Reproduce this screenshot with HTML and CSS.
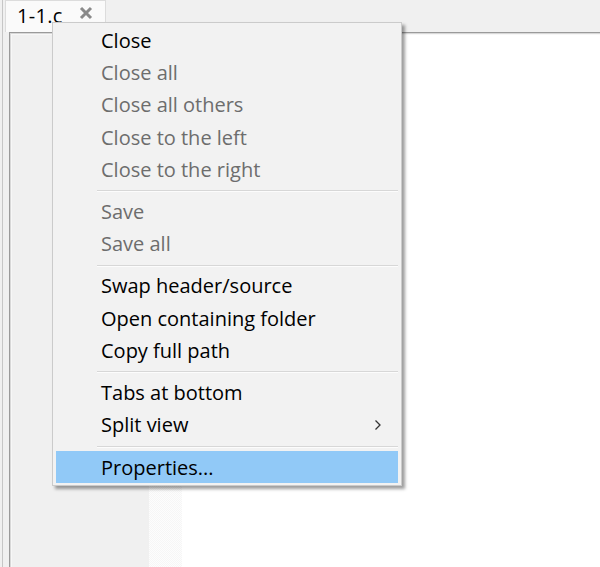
FILE: index.html
```html
<!DOCTYPE html>
<html>
<head>
<meta charset="utf-8">
<link rel="stylesheet" href="styles.css">
</head>
<body>
<div class="window">
  <div class="tabbar">
    <div class="tab">
      <span class="tab-label">1-1.c</span>
      <svg class="tab-close" width="14" height="14" viewBox="0 0 14 14"><path d="M2 2 L12 12 M12 2 L2 12" stroke="#8a8a8a" stroke-width="3" stroke-linecap="butt"/></svg>
    </div>
  </div>
  <div class="editor">
    <div class="gutter"></div>
    <div class="fold"></div>
    <div class="text-area"></div>
  </div>
</div>
<div class="menu">
  <div class="item">Close</div>
  <div class="item disabled">Close all</div>
  <div class="item disabled">Close all others</div>
  <div class="item disabled">Close to the left</div>
  <div class="item disabled">Close to the right</div>
  <div class="sep"></div>
  <div class="item disabled">Save</div>
  <div class="item disabled">Save all</div>
  <div class="sep"></div>
  <div class="item">Swap header/source</div>
  <div class="item">Open containing folder</div>
  <div class="item">Copy full path</div>
  <div class="sep"></div>
  <div class="item">Tabs at bottom</div>
  <div class="item sub">Split view<svg class="arrow" width="8" height="12" viewBox="0 0 8 12"><path d="M1.5 1.5 L6 6 L1.5 10.5" fill="none" stroke="#333" stroke-width="1.3"/></svg></div>
  <div class="sep"></div>
  <div class="item active">Properties...</div>
</div>
</body>
</html>
```

FILE: styles.css
```css
html, body {
  margin: 0;
  padding: 0;
  width: 600px;
  height: 567px;
  overflow: hidden;
  background: #f0f0f0;
  font-family: "Open Sans", "Noto Sans", sans-serif;
}
.window {
  margin-left: 2px;
  height: 567px;
  border-left: 1px solid #c6c6c6;
  display: flex;
  flex-direction: column;
}
.tabbar {
  height: 32px;
  display: flex;
  align-items: flex-end;
  padding-left: 2px;
}
.tab {
  width: 101px;
  height: 32px;
  box-sizing: border-box;
  background: #fafafa;
  border: 1px solid #dcdcdc;
  border-bottom: none;
  display: flex;
  align-items: center;
  padding-left: 11px;
  padding-bottom: 2px;
}
.tab-label {
  font-size: 20px;
  color: #000;
  line-height: 1;
  letter-spacing: 0.3px;
}
.tab-close {
  margin-left: 16px;
  margin-top: -6px;
}
.editor {
  flex: 1;
  margin-left: 6px;
  display: flex;
  border-top: 1px solid #9a9a9a;
  border-left: 1px solid #9a9a9a;
  box-shadow: inset 1px 1px 0 #d8d8d8, inset 2px 2px 0 #f7f7f7;
  padding: 2px 0 0 2px;
}
.gutter {
  width: 137px;
  background: #f0f0f0;
}
.fold {
  width: 33px;
  background-color: #f6f6f6;
  background-image:
    linear-gradient(45deg, #fdfdfd 25%, transparent 25%, transparent 75%, #fdfdfd 75%),
    linear-gradient(45deg, #fdfdfd 25%, transparent 25%, transparent 75%, #fdfdfd 75%);
  background-size: 2px 2px;
  background-position: 0 0, 1px 1px;
}
.text-area {
  flex: 1;
  background: #fff;
}
.menu {
  position: absolute;
  left: 52px;
  top: 22px;
  width: 350px;
  box-sizing: border-box;
  background: #f2f2f2;
  border: 1px solid #cbcbcb;
  padding: 2px 3px;
  box-shadow: 3px 3px 3px rgba(0,0,0,0.38);
}
.item {
  height: 32.2px;
  display: flex;
  align-items: center;
  padding-left: 45px;
  font-size: 20px;
  color: #000;
  position: relative;
  margin-top: -0.5px;
  margin-bottom: 0.5px;
}
.item.disabled {
  color: #6d6d6d;
}
.item.active {
  background: #91c9f7;
  margin-top: 0;
  margin-bottom: 0;
}
.item .arrow {
  position: absolute;
  right: 16px;
  top: 10px;
}
.sep {
  height: 10px;
  display: flex;
  align-items: center;
  margin-left: 41px;
}
.sep::before {
  content: "";
  flex: 1;
  height: 1px;
  background: #d7d7d7;
  box-shadow: 0 1px 0 #fcfcfc;
}
```
